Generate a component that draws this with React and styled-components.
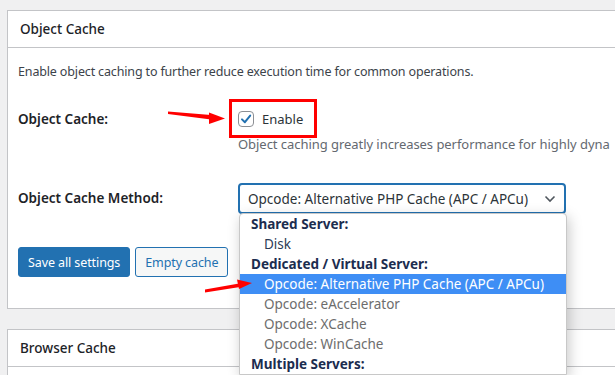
import React from "react";
import styled, { createGlobalStyle } from "styled-components";

const GlobalStyle = createGlobalStyle`
  html, body {
    margin: 0;
    padding: 0;
    background: #f0f0f1;
    overflow: hidden;
  }
  body {
    font-family: "Noto Sans", "Open Sans", sans-serif;
    color: #3c434a;
  }
`;

const options = [
  { label: "Shared Server:", group: true },
  { label: "Disk" },
  { label: "Dedicated / Virtual Server:", group: true },
  { label: "Opcode: Alternative PHP Cache (APC / APCu)", selected: true },
  { label: "Opcode: eAccelerator", disabled: true },
  { label: "Opcode: XCache", disabled: true },
  { label: "Opcode: WinCache", disabled: true },
  { label: "Multiple Servers:", group: true },
];

const App = () => {
  return (
    <Page>
      <GlobalStyle />
      <Postbox>
        <BoxHeader>Object Cache</BoxHeader>
        <Inside>
          <Intro>
            Enable object caching to further reduce execution time for common
            operations.
          </Intro>
          <FormTable>
            <Row>
              <Th $line={20}>Object Cache:</Th>
              <Td>
                <CheckLabel>
                  <Checkbox>
                    <svg width="12" height="12" viewBox="0 0 12 12">
                      <path
                        d="M2 6.4 L4.9 9.2 L10.2 2.6"
                        fill="none"
                        stroke="#2271b1"
                        strokeWidth="2"
                        strokeLinecap="round"
                        strokeLinejoin="round"
                      />
                    </svg>
                  </Checkbox>
                  Enable
                  <Highlight />
                </CheckLabel>
                <Description>
                  Object caching greatly increases performance for highly dyna
                </Description>
              </Td>
            </Row>
            <Row $gap={29}>
              <Th $line={31}>Object Cache Method:</Th>
              <Td>
                <SelectWrap>
                  <Select>
                    Opcode: Alternative PHP Cache (APC / APCu)
                    <svg width="12" height="8" viewBox="0 0 12 8">
                      <path
                        d="M1.5 1.5 L6 6 L10.5 1.5"
                        fill="none"
                        stroke="#50575e"
                        strokeWidth="1.6"
                      />
                    </svg>
                  </Select>
                  <Dropdown>
                    {options.map((o) => (
                      <Option
                        key={o.label}
                        $group={o.group}
                        $selected={o.selected}
                        $disabled={o.disabled}
                      >
                        {o.label}
                      </Option>
                    ))}
                  </Dropdown>
                </SelectWrap>
              </Td>
            </Row>
          </FormTable>
          <Buttons>
            <Button $primary>Save all settings</Button>
            <Button>Empty cache</Button>
          </Buttons>
        </Inside>
      </Postbox>
      <Postbox>
        <BoxHeader>Browser Cache</BoxHeader>
        <Inside />
      </Postbox>
      <Arrows width="615" height="375" viewBox="0 0 615 375">
        <polygon points="168,111.5 211,115 211,119.5 168,114" fill="#f00" />
        <polygon points="225,118.5 209,112.5 209,124" fill="#f00" />
        <polygon points="205,289.5 239,283.5 240,287 205,292.5" fill="#f00" />
        <polygon points="252,283 237,279.5 239,289" fill="#f00" />
      </Arrows>
    </Page>
  );
};

export default App;

const Page = styled.div`
  position: relative;
  width: 615px;
  height: 375px;
  padding: 10px 0 0 7px;
  box-sizing: border-box;
  display: flex;
  flex-direction: column;
  gap: 20px;
`;

const Postbox = styled.div`
  width: 660px;
  background: #fff;
  border: 1px solid #c3c4c7;
  flex-shrink: 0;
`;

const BoxHeader = styled.div`
  height: 36px;
  display: flex;
  align-items: center;
  padding: 0 12px;
  border-bottom: 1px solid #c3c4c7;
  font-size: 13.5px;
  font-weight: 500;
  color: #1d2327;
`;

const Inside = styled.div`
  padding: 14px 10px 31px;
  min-height: 20px;
`;

const Intro = styled.p`
  margin: 0;
  font-size: 12.5px;
  letter-spacing: -0.15px;
  line-height: 20px;
`;

const FormTable = styled.div`
  display: flex;
  flex-direction: column;
  margin-top: 27px;
`;

const Row = styled.div`
  display: flex;
  align-items: flex-start;
  margin-top: ${(p) => (p.$gap ? `${p.$gap}px` : "0")};
`;

const Th = styled.div`
  width: 220px;
  flex-shrink: 0;
  font-size: 13.5px;
  font-weight: 600;
  color: #1d2327;
  line-height: ${(p) => p.$line}px;
`;

const Td = styled.div`
  display: flex;
  flex-direction: column;
  align-items: flex-start;
`;

const CheckLabel = styled.label`
  position: relative;
  display: flex;
  align-items: center;
  gap: 8px;
  height: 20px;
  font-size: 13px;
  color: #2c3338;
`;

const Checkbox = styled.span`
  width: 16px;
  height: 16px;
  box-sizing: border-box;
  border: 1px solid #8c8f94;
  border-radius: 4px;
  display: flex;
  align-items: center;
  justify-content: center;
  background: #fff;
`;

const Highlight = styled.span`
  position: absolute;
  left: -9px;
  right: -14px;
  top: -10px;
  bottom: -9px;
  border: 3px solid #f00;
`;

const Description = styled.p`
  margin: 5px 0 0;
  font-size: 13px;
  letter-spacing: -0.05px;
  line-height: 20px;
  color: #646970;
  white-space: nowrap;
`;

const SelectWrap = styled.div`
  position: relative;
`;

const Select = styled.div`
  width: 328px;
  height: 31px;
  box-sizing: border-box;
  border: 2px solid #2271b1;
  border-radius: 4px;
  padding: 0 8px 0 8px;
  display: flex;
  align-items: center;
  justify-content: space-between;
  font-size: 13.5px;
  color: #2c3338;
  background: #fff;
`;

const Dropdown = styled.div`
  position: absolute;
  top: 30px;
  left: 1px;
  width: 326px;
  background: #fff;
  border: 1px solid #c8c8c8;
  border-radius: 4px 4px 0 0;
  box-shadow: 2px 4px 14px rgba(0, 0, 0, 0.22);
  z-index: 2;
`;

const Option = styled.div`
  height: 20px;
  line-height: 20px;
  font-size: 13.5px;
  padding-left: ${(p) => (p.$group ? "11px" : "24px")};
  font-weight: ${(p) => (p.$group ? 700 : 400)};
  color: ${(p) =>
    p.$selected
      ? "#fff"
      : p.$group
      ? "#1c2d4f"
      : p.$disabled
      ? "#6d6d6d"
      : "#2b3a55"};
  background: ${(p) => (p.$selected ? "#3e8ef5" : "transparent")};
`;

const Buttons = styled.div`
  display: flex;
  gap: 5px;
  margin-top: 33px;
`;

const Button = styled.div`
  height: 30px;
  box-sizing: border-box;
  padding: 0 9px;
  display: flex;
  align-items: center;
  border-radius: 3px;
  font-size: 12.5px;
  letter-spacing: -0.1px;
  border: 1px solid #2271b1;
  background: ${(p) => (p.$primary ? "#2271b1" : "#f6f7f7")};
  color: ${(p) => (p.$primary ? "#fff" : "#2271b1")};
`;

const Arrows = styled.svg`
  position: absolute;
  top: 0;
  left: 0;
  pointer-events: none;
  z-index: 3;
`;
